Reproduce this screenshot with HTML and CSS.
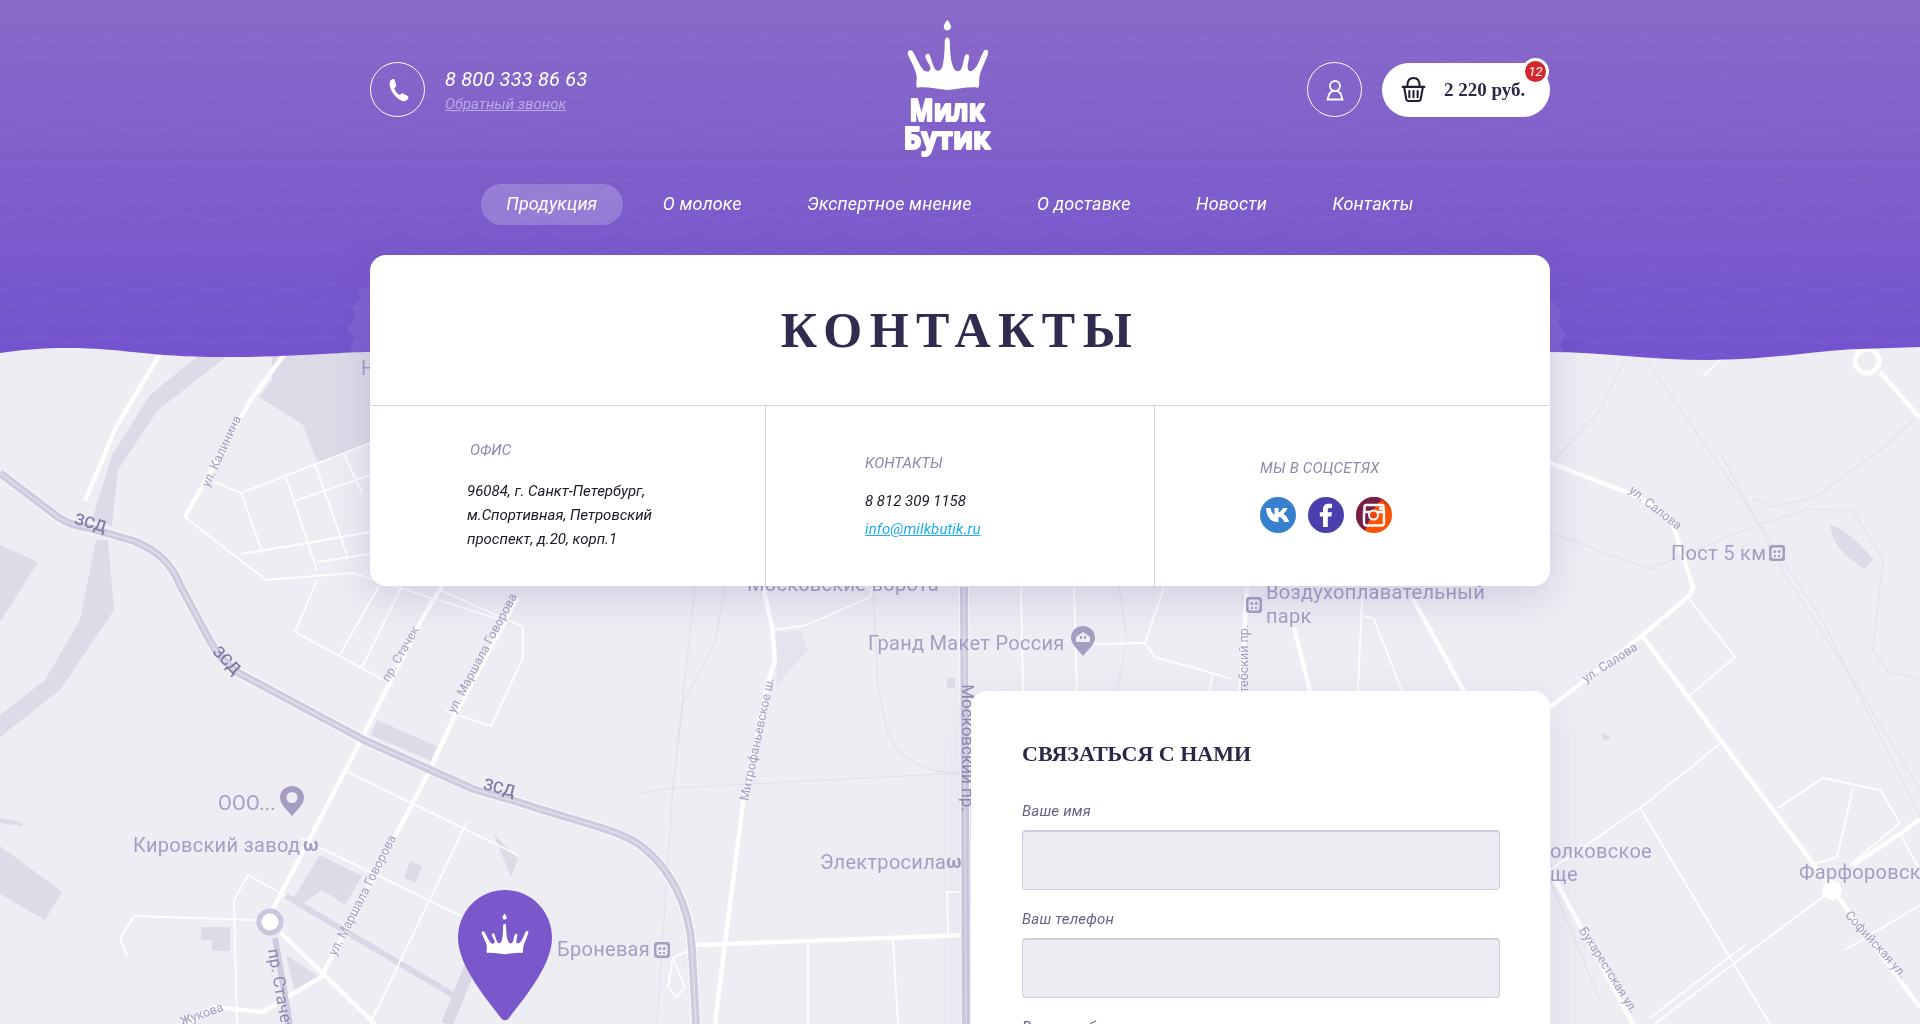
FILE: index.html
```html
<!DOCTYPE html>
<html lang="ru">
<head>
<meta charset="utf-8">
<title>Контакты — Милк Бутик</title>
<link rel="stylesheet" href="styles.css">
</head>
<body>
<div class="page">
  <svg class="map" viewBox="0 0 1920 1024" width="1920" height="1024" aria-hidden="true">
    <defs>
      <symbol id="metro" viewBox="0 0 16 16"><rect width="16" height="16" rx="3" fill="#a79dc3"/><rect x="2.5" y="2.5" width="11" height="11" rx="2" fill="#eeedf3"/><circle cx="5.8" cy="6.5" r="1.5" fill="#a79dc3"/><circle cx="10.2" cy="6.5" r="1.5" fill="#a79dc3"/><rect x="5" y="10" width="2" height="2" fill="#a79dc3"/><rect x="9" y="10" width="2" height="2" fill="#a79dc3"/></symbol>
      <symbol id="loc" viewBox="0 0 24 30"><path d="M12 0C5.4 0 0 5 0 11.5 0 18 7 24 12 30c5-6 12-12 12-18.500C24 5 18.600 0 12 0z" fill="#a79dc3"/><circle cx="12" cy="11.500" r="5.500" fill="#eeedf3"/></symbol>
      <symbol id="house" viewBox="0 0 24 30"><path d="M12 0C5.4 0 0 5 0 11.5 0 18 7 24 12 30c5-6 12-12 12-18.500C24 5 18.600 0 12 0z" fill="#a79dc3"/><path d="M5 11 12 6 19 11V16H5Z" fill="#eeedf3"/><rect x="9" y="10" width="2" height="3" fill="#a79dc3"/><rect x="13" y="10" width="2" height="3" fill="#a79dc3"/></symbol>
      <symbol id="crown" viewBox="80 28 250 218">
        <path d="M203 30C209 38 215 46 214 52 213 60 207 62 203 62 199 62 193 60 192 52 191 46 197 38 203 30Z"/>
        <path d="M203 84C209 84 211 92 211 105 211 130 214 160 222 176 228 188 240 190 246 178 251 165 252 150 256 140 259 132 270 134 269 144 267 158 262 172 266 182 272 192 284 182 292 170 300 158 306 136 314 124 320 118 330 122 326 134 318 160 304 180 300 205 298 218 302 228 296 236 270 232 240 240 203 243 170 240 140 232 112 236 106 228 112 215 110 200 106 178 92 155 84 136 80 124 92 118 98 126 108 142 118 168 130 182 140 192 152 186 152 176 150 165 140 155 137 145 135 133 146 130 150 138 155 150 158 168 166 180 175 190 185 182 188 172 194 150 195 120 195 100 195 92 197 84 203 84Z"/>
      </symbol>
    </defs>

    <rect class="m-land" width="1920" height="1024"/>

    <g class="m-blurred">
    <g class="m-dark">
      <path d="M205 350 150 395 112 455 92 520 112 526 118 470 158 410 235 350Z"/>
      <path d="M96 540 108 540 114 610 60 690 0 737 0 715 45 680 80 620Z"/>
      <path d="M0 545 38 562 0 622Z"/>
      <path d="M0 846 62 892 45 920 0 894Z"/>
      <path d="M0 818 22 822 22 826 0 823Z"/>
      <path d="M272 350 375 350 375 440 335 458 317 462 303 425 259 397 272 380Z"/>
      <path d="M377 720 437 746 431 761 371 735Z"/>
      <path d="M320 855 362 876 345 905 322 890 300 905 292 900Z"/>
      <path d="M410 861 422 866 416 883 404 878Z"/>
      <path d="M493 833 518 859 511 877Z"/>
      <path d="M201 927 230 927 230 951 212 951 212 940 201 940Z"/>
      <path d="M286 955 319 977 295 992Z"/>
      <path d="M775 633 800 630 808 650 790 670 777 687Z" opacity=".55"/>
      <path d="M947 678 955 678 955 688 947 688Z"/>
      <path d="M1830 525C1845 528 1865 548 1873 560L1865 569C1850 560 1833 548 1830 525Z"/>
      <path d="M1602 733 1610 736 1608 741 1603 740Z"/>
    </g>

    <g class="m-band">
      <path d="M286 896 460 999"/>
      <path d="M473 960 447 1024" class="m-band-w"/>
    </g>

    <g class="m-faint">
      <path d="M695 587 673 787 657 1024"/>
      <path d="M725 587 715 643 683 703 673 787"/>
      <path d="M640 793 673 788 960 773"/>
      <path d="M873 587 878 687 887 730C895 755 920 773 960 773"/>
      <path d="M1119 587 1127 640 1117 691"/>
      <path d="M1647 361 1757 520 1823 622 1920 817"/>
      <path d="M1722 456 1787 578 1850 675 1920 790"/>
      <path d="M1753 498 1773 507 1817 496 1887 445 1920 414"/>
      <path d="M1550 533 1650 569 1757 525 1807 509 1853 511 1883 560 1873 649 1887 671 1920 680"/>
      <path d="M1550 465 1600 410 1625 360"/>
      <path d="M1600 1000 1550 880"/>
    </g>

    <g class="m-thick">
      <path d="M161 352 116 427 85 501"/>
      <path d="M286 352 250 401 185 517"/>
      <path d="M442 586 422 619 357 748 272 911"/>
      <path d="M518 597 455 715 429 772 321 977 263 1012 214 1007 187 1024"/>
      <path d="M281 933 375 1024"/>
      <path d="M763 587 772 627 775 660 768 683 743 803 725 943 715 1024"/>
      <path d="M695 945 967 935"/>
      <path d="M1247 587 1241 691"/>
      <path d="M1294 627 1310 691"/>
      <path d="M1413 599 1464 691"/>
      <path d="M1540 459 1623 491C1650 502 1666 512 1673 525L1693 587 1690 595 1643 635 1540 715"/>
      <path d="M1643 637 1833 890 1920 1007"/>
      <path d="M1880 372 1920 418"/>
      <path d="M1550 870 1633 1024"/>
      <path d="M1920 819 1900 834 1853 865"/>
    </g>

    <g class="m-thin">
      <path d="M185 517 266 580 353 573 498 619"/>
      <path d="M214 482 241 493 370 443"/>
      <path d="M241 493 263 554"/>
      <path d="M286 477 317 571"/>
      <path d="M295 501 370 475"/>
      <path d="M315 464 348 558"/>
      <path d="M344 454 362 493"/>
      <path d="M241 554 308 543 370 532"/>
      <path d="M317 562 370 554"/>
      <path d="M317 580 295 632 393 685"/>
      <path d="M339 656 379 586"/>
      <path d="M362 667 402 586"/>
      <path d="M440 590 523 627 523 658 491 726 446 711"/>
      <path d="M348 772 518 855"/>
      <path d="M467 822 370 1024"/>
      <path d="M300 838 480 925"/>
      <path d="M237 1024 234 900 248 875 286 896"/>
      <path d="M134 916 254 920"/>
      <path d="M120 938 134 916"/>
      <path d="M120 938 127 957"/>
      <path d="M773 630 807 625 870 597 873 587"/>
      <path d="M808 943 808 1024"/>
      <path d="M893 940 898 1024"/>
      <path d="M948 933 947 892 960 892"/>
      <path d="M700 945 673 958 668 987 677 997 685 987 673 958"/>
      <path d="M1021 587 1023 691"/>
      <path d="M1074 587 1077 691"/>
      <path d="M1164 587 1145 643 1155 657 1233 679"/>
      <path d="M1094 644 1145 643"/>
      <path d="M1213 675 1209 691"/>
      <path d="M1362 599 1358 691"/>
      <path d="M1360 615 1374 619 1402 691"/>
      <path d="M1690 600 1735 657 1690 695"/>
      <path d="M1720 744 1640 808 1550 870"/>
      <path d="M1640 808 1770 1024"/>
      <path d="M1778 808 1823 778 1880 790 1900 823 1850 865"/>
      <path d="M1853 788 1837 857 1817 863"/>
      <path d="M1832 890 1753 949 1655 1024"/>
      <path d="M1745 945 1650 1018"/>
      <path d="M1845 950 1920 905"/>
      <path d="M1703 376 1730 352"/>
      <path d="M1900 834 1920 870"/>
    </g>

    <g class="m-highway">
      <path class="m-hw-edge" d="M0 473 58 517C68 524 78 526 89 528L134 541C160 552 172 565 180 585L210 641C216 652 226 664 237 672L366 741 473 789 518 802C570 820 615 828 640 845 670 868 690 905 692 950L696 1024"/>
      <path class="m-hw-core" d="M0 473 58 517C68 524 78 526 89 528L134 541C160 552 172 565 180 585L210 641C216 652 226 664 237 672L366 741 473 789 518 802C570 820 615 828 640 845 670 868 690 905 692 950L696 1024"/>
      <path class="m-hw-line" d="M0 473 58 517C68 524 78 526 89 528L134 541C160 552 172 565 180 585L210 641C216 652 226 664 237 672L366 741 473 789 518 802C570 820 615 828 640 845 670 868 690 905 692 950L696 1024"/>
      <path class="m-hw-edge" d="M964 587 966 1024"/>
      <path class="m-hw-core" d="M964 587 966 1024"/>
      <path class="m-hw-line" d="M964 587 966 1024"/>
    </g>

    <circle class="m-ring" cx="270" cy="922" r="11"/>
    <path class="m-ring-road" d="M275 938 290 1024"/>
    <circle class="m-ring-w" cx="1867" cy="361" r="12"/>
    <circle class="m-disc" cx="1832" cy="890" r="10"/>

    <g class="m-label">
      <text x="361" y="375">Нарвская</text>
      <text x="747" y="591">Московские ворота</text>
      <text x="868" y="650">Гранд Макет Россия</text>
      <text x="1266" y="599">Воздухоплавательный</text>
      <text x="1266" y="623">парк</text>
      <text x="1671" y="560">Пост 5 км</text>
      <text x="218" y="810">ООО...</text>
      <text x="133" y="852">Кировский завод</text>
      <text x="820" y="869">Электросила</text>
      <text x="557" y="956">Броневая</text>
      <text x="1652" y="858" text-anchor="end">Волковское</text>
      <text x="1578" y="881" text-anchor="end">кладбище</text>
      <text x="1799" y="879">Фарфоровская</text>
    </g>
    <use href="#metro" x="654" y="942" width="16" height="16"/>
    <use href="#metro" x="1769" y="545" width="16" height="16"/>
    <use href="#metro" x="1246" y="597" width="16" height="16"/>
    <use href="#loc" x="280" y="786" width="24" height="30"/>
    <use href="#house" x="1071" y="626" width="24" height="30"/>
    <g class="m-omega">
      <text x="303" y="851">ω</text>
      <text x="946" y="868">ω</text>
    </g>

    <g class="m-small">
      <text transform="translate(225 453) rotate(-65)">ул. Калинина</text>
      <text transform="translate(404 656) rotate(-60)">пр. Стачек</text>
      <text transform="translate(486 655) rotate(-62)">ул. Маршала Говорова</text>
      <text transform="translate(366 897) rotate(-63)">ул. Маршала Говорова</text>
      <text transform="translate(203 1018) rotate(-20)">Жукова</text>
      <text transform="translate(761 740) rotate(-78)">Митрофаньевское ш.</text>
      <text transform="translate(1653 511) rotate(38)">ул. Салова</text>
      <text transform="translate(1612 666) rotate(-33)">ул. Салова</text>
      <text transform="translate(1605 972) rotate(58)">Бухарестская ул.</text>
      <text transform="translate(1873 947) rotate(48)">Софийская ул.</text>
    </g>
    <g class="m-road">
      <text class="m-road-lg" transform="translate(968 748) rotate(90)">Московский пр.</text>
      <text class="m-road-md" text-anchor="end" transform="translate(1248 625) rotate(-90)">Витебский пр.</text>
      <text class="m-road-lg" transform="translate(281 990) rotate(80)">пр. Стачек</text>
      <text class="m-hw-label" transform="translate(89 528) rotate(16)">ЗСД</text>
      <text class="m-hw-label" transform="translate(223 664) rotate(46)">ЗСД</text>
      <text class="m-hw-label" transform="translate(498 793) rotate(14)">ЗСД</text>
    </g>
    </g>

    <path class="m-pin" d="M505 890C479 890 458 911 458 938 458 967 490 1003 501 1018 503 1021 507 1021 509 1018 520 1003 552 967 552 938 552 911 531 890 505 890Z"/>
    <use href="#crown" x="481" y="913" width="48" height="42" class="m-pin-crown"/>
  </svg>

  <svg class="hero" viewBox="0 0 1920 370" width="1920" height="370" aria-hidden="true">
    <defs>
      <linearGradient id="heroGrad" x1="0" y1="0" x2="0" y2="1">
        <stop offset="0" stop-color="#8a69c9"/>
        <stop offset="1" stop-color="#7252ce"/>
      </linearGradient>
      <pattern id="waves" width="73" height="17.500" patternUnits="userSpaceOnUse">
        <path d="M0 9C12 9 24 4 36.500 4 49 4 61 13 73 9" class="h-wave"/>
      </pattern>
      <clipPath id="heroClip">
        <path d="M0 353C20 350 40 348 70 348 120 348 150 357 220 357 300 357 340 352 370 352L1550 352C1600 352 1650 360 1707 360 1770 360 1820 350 1860 349L1920 347 1920 0 0 0Z"/>
      </clipPath>
    </defs>
    <g clip-path="url(#heroClip)">
      <rect width="1920" height="370" fill="url(#heroGrad)"/>
      <rect y="36" width="1920" height="334" fill="url(#waves)"/>
      <path class="h-tree" d="M370 285 358 290 360 300 352 306 356 318 347 328 354 338 350 352 370 352Z"/>
      <path class="h-tree" d="M1550 300 1562 310 1558 322 1566 334 1560 345 1564 352 1550 352Z"/>
    </g>
  </svg>

  <div class="container">
    <header class="header">
      <div class="side">
        <span class="circle">
          <svg class="i-phone" viewBox="0 0 24 24"><path d="M7 3.500C8 3 9 3 9.500 4.500L10.500 8C10.800 9 10 9.800 9 10.500 9.500 12.500 11.500 15 13.500 16 14.500 15 15.200 14.300 16.200 14.800L19.500 16.500C20.500 17 20.500 18 20 19 19 20.800 17 21.500 15 20.500 10 18.500 6 13 5.300 8 5 6 5.500 4.500 7 3.500Z"/></svg>
        </span>
        <div class="phone">
          <div class="phone-num">8 800 333 86 63</div>
          <a class="phone-back" href="#">Обратный звонок</a>
        </div>
      </div>

      <a class="logo" href="#" aria-label="Милк Бутик">
        <svg class="logo-svg" viewBox="0 0 90 137" width="90" height="137">
          <use href="#crown" x="4.500" y="-1" width="83" height="72" class="logo-crown"/>
          <text class="logo-text" x="45" y="101" text-anchor="middle" textLength="75" lengthAdjust="spacingAndGlyphs">Милк</text>
          <text class="logo-text" x="45" y="129" text-anchor="middle" textLength="87" lengthAdjust="spacingAndGlyphs">Бутик</text>
        </svg>
      </a>

      <div class="side">
        <a class="circle" href="#" aria-label="Кабинет">
          <svg class="i-user" viewBox="0 0 20 22"><circle cx="10" cy="7" r="5"/><path d="M2.500 20.500 4 15.500C4.500 14 6 13.200 7 12.200H13C14 13.200 15.500 14 16 15.500L17.500 20.500Z"/></svg>
        </a>
        <a class="cart" href="#">
          <svg class="i-basket" viewBox="0 0 24 26"><path class="b-line" d="M6 10C6 5 8 2 12 2 16 2 18 5 18 10"/><path class="b-line" d="M1.500 10.500H22.500"/><path class="b-line" d="M3 11 5 22C5.200 23.500 6 24 7.500 24H16.500C18 24 18.800 23.500 19 22L21 11"/><path class="b-line" d="M8 14.500V20.500M12 14.500V20.500M16 14.500V20.500"/></svg>
          <span class="cart-sum">2 220 руб.</span>
          <span class="cart-badge">12</span>
        </a>
      </div>
    </header>

    <nav class="nav">
      <a class="nav-item is-active" href="#">Продукция</a>
      <a class="nav-item" href="#">О молоке</a>
      <a class="nav-item" href="#">Экспертное мнение</a>
      <a class="nav-item" href="#">О доставке</a>
      <a class="nav-item" href="#">Новости</a>
      <a class="nav-item" href="#">Контакты</a>
    </nav>

    <section class="card">
      <h1 class="title">Контакты</h1>
      <div class="cols">
        <div class="col col-office">
          <div class="col-label col-label-shift">Офис</div>
          <p class="address">96084, г. Санкт-Петербург,<br>м.Спортивная, Петровский<br>проспект, д.20, корп.1</p>
        </div>
        <div class="col col-contacts">
          <div class="col-label">Контакты</div>
          <div class="contact-line">8 812 309 1158</div>
          <a class="contact-link" href="#">info@milkbutik.ru</a>
        </div>
        <div class="col col-social">
          <div class="col-label col-label-wide">Мы в соцсетях</div>
          <div class="socials">
            <a href="#" aria-label="ВКонтакте">
              <svg class="soc" viewBox="0 0 36 36"><circle cx="18" cy="18" r="18" fill="#3680cd"/><path fill="#fff" d="M6 11H10.500C11 14 12.500 17 14.500 17.800V11H18.500V15.500C20 15.300 22 13.200 23 11H27.500C26.700 13.500 24.800 15.800 23.300 16.800 25 17.800 27.700 20 29 25H24.300C23.300 22 21 20 18.500 19.700V25H17C11 25 6.600 20 6 11Z"/></svg>
            </a>
            <a href="#" aria-label="Facebook">
              <svg class="soc" viewBox="0 0 36 36"><circle cx="18" cy="18" r="18" fill="#4b3fb0"/><path fill="#fff" d="M15 30V19.500H11.800V15.300H15V12.500C15 8.800 17 6.800 20.500 6.800H24V11H21.700C20.300 11 19.800 11.700 19.800 12.900V15.300H24L23.300 19.500H19.800V30Z"/></svg>
            </a>
            <a href="#" aria-label="Instagram">
              <svg class="soc" viewBox="0 0 36 36"><defs><clipPath id="igc"><circle cx="18" cy="18" r="18"/></clipPath></defs><g clip-path="url(#igc)"><rect width="36" height="36" fill="#ff5200"/><path d="M0 0H30L20 8 8 36H0Z" fill="#751f48"/><path d="M22 0H36V14L28 6Z" fill="#d13a2a"/></g><path fill="none" stroke="#fff" stroke-width="2.400" d="M8 15H28V26C28 27.500 27 28.500 25.500 28.500H10.500C9 28.500 8 27.500 8 26Z"/><path fill="none" stroke="#fff" stroke-width="2.400" d="M8.500 15V10C8.500 8.800 9.300 8 10.500 8H25.500C26.700 8 27.500 8.800 27.500 10V15"/><rect x="23" y="9.500" width="3.500" height="3.500" rx="1" fill="#fff"/><circle cx="17.500" cy="18" r="5.500" fill="#fff"/><circle cx="17.500" cy="18" r="3.500" fill="#f2450a"/></svg>
            </a>
          </div>
        </div>
      </div>
    </section>

    <section class="form-card">
      <h2 class="form-title">Связаться с нами</h2>
      <label class="f-label" for="n">Ваше имя</label>
      <input class="f-input" id="n" type="text">
      <label class="f-label" for="p">Ваш телефон</label>
      <input class="f-input" id="p" type="text">
      <label class="f-label" for="m">Ваше сообщение</label>
    </section>
  </div>
</div>
</body>
</html>
```

FILE: styles.css
```css
* { box-sizing: border-box; }
html, body { margin: 0; padding: 0; }
body { background: #eeedf3; font-family: "Roboto", "Liberation Sans", sans-serif; overflow: hidden; }
a { color: inherit; text-decoration: none; }

.page { position: relative; width: 1920px; height: 1024px; overflow: hidden; }
.map, .hero { position: absolute; left: 0; top: 0; display: block; }

/* map */
.m-blurred { filter: blur(.45px); }
.m-land { fill: #eeedf3; }
.m-dark path { fill: #dedbe8; }
.m-band path { fill: none; stroke: #dbd7e6; stroke-width: 6; }
.m-band .m-band-w { stroke-width: 12; }
.m-faint path { fill: none; stroke: #e2e0eb; stroke-width: 1.2; }
.m-thick path { fill: none; stroke: #fff; stroke-width: 4.500; stroke-linejoin: round; opacity: .95; }
.m-thin path { fill: none; stroke: #fff; stroke-width: 1.800; stroke-linejoin: round; opacity: .95; }
.m-highway path { fill: none; stroke-linejoin: round; }
.m-hw-edge { stroke: #fff; stroke-width: 10; opacity: .8; }
.m-hw-core { stroke: #cfcbdf; stroke-width: 8; }
.m-hw-line { stroke: #e2dfea; stroke-width: 1.5; }
.m-ring { fill: #fff; stroke: #cbc6dc; stroke-width: 5; }
.m-ring-road { fill: none; stroke: #cfcbdf; stroke-width: 6; }
.m-ring-w { fill: none; stroke: #fff; stroke-width: 5; }
.m-disc { fill: #fff; }
.m-label text { font: 400 20px "Roboto", sans-serif; letter-spacing: .3px; fill: #a79dc3; }
.m-omega text { font: 700 19px "Roboto", sans-serif; fill: #a79dc3; }
.m-small text { font: 400 12.500px "Roboto", sans-serif; fill: #a79dc3; text-anchor: middle; }
.m-road-lg { font: 400 17px "Roboto", sans-serif; fill: #9087b0; }
.m-road-md { font: 400 12.500px "Roboto", sans-serif; fill: #a79dc3; }
.m-hw-label { font: 500 16px "Roboto", sans-serif; fill: #8279a6; text-anchor: middle; }
.m-road .m-road-lg { text-anchor: middle; dominant-baseline: central; }
.m-pin { fill: #7a58cc; }
.m-pin-crown { fill: #fff; }

/* hero */
.h-wave { fill: none; stroke: #fff; stroke-opacity: .028; stroke-width: 2; }
.h-tree { fill: #fff; opacity: .07; }

/* layout */
.container { position: relative; width: 1180px; margin: 0 auto; }
.header { display: flex; justify-content: space-between; align-items: flex-start; height: 184px; padding-top: 20px; }
.side { display: flex; align-items: center; gap: 20px; margin-top: 42px; }
.circle { flex: none; display: flex; align-items: center; justify-content: center; width: 55px; height: 55px; border: 1px solid #fff; border-radius: 50%; }
.i-phone { width: 30px; height: 30px; fill: #fff; }
.i-user { width: 20px; height: 22px; fill: none; stroke: #fff; stroke-width: 1.8; }
.phone-num { font-size: 20px; font-style: italic; line-height: 24px; color: #fff; letter-spacing: .2px; white-space: nowrap; }
.phone-back { display: block; margin-top: 4px; font-size: 15px; font-style: italic; line-height: 18px; color: #bba9e6; text-decoration: underline; white-space: nowrap; }

.logo { display: block; width: 90px; height: 137px; }
.logo-svg { display: block; overflow: visible; }
.logo-crown { fill: #fff; stroke: none; }
.logo-text { font: 700 30px "Open Sans", "Noto Sans", sans-serif; fill: #fff; stroke: #fff; stroke-width: 2.200; stroke-linejoin: round; }

.cart { position: relative; display: flex; align-items: center; width: 168px; height: 54px; padding-left: 19px; background: #fff; border-radius: 27px; }
.i-basket { width: 25px; height: 27px; fill: none; }
.b-line { stroke: #231a36; stroke-width: 2; fill: none; stroke-linecap: round; }
.cart-sum { margin-left: 18px; font: 700 19px "Liberation Serif", serif; color: #2e2748; white-space: nowrap; }
.cart-badge { position: absolute; right: 1px; top: -5px; width: 27px; height: 27px; border: 3px solid #fff; border-radius: 50%; background: #d3262e; color: #fff; font-size: 13px; font-style: italic; line-height: 21px; text-align: center; }

.nav { display: flex; justify-content: center; gap: 14.500px; height: 41px; margin-bottom: 30px; }
.nav-item { display: flex; align-items: center; padding: 0 25.500px 2px; border-radius: 21px; font-size: 18px; font-style: italic; letter-spacing: .12px; color: #fff; white-space: nowrap; }
.nav-item.is-active { background: rgba(255, 255, 255, .2); }

.card { background: #fff; border-radius: 16px; box-shadow: 0 10px 40px rgba(90, 70, 150, .2); }
.title { display: flex; align-items: center; justify-content: center; height: 151px; margin: 0; border-bottom: 1px solid #d6d3e4; font: 700 50px "Liberation Serif", serif; letter-spacing: 7.500px; text-transform: uppercase; color: #332a50; }
.cols { display: grid; grid-template-columns: 395px 389px 1fr; height: 180px; }
.col { display: flex; flex-direction: column; justify-content: center; align-items: flex-start; }
.col + .col { border-left: 1px solid #d6d3e4; }
.col-office { padding-left: 97px; }
.col-contacts { padding-left: 99px; }
.col-social { padding-left: 105px; }
.col-label { font-size: 15px; font-style: italic; line-height: 18px; color: #8f88ab; text-transform: uppercase; }
.col-label-shift { margin-left: 3px; }
.col-label-wide { letter-spacing: .2px; }
.address { margin: 20px 0 0; font-size: 15px; font-style: italic; line-height: 24px; color: #1b1726; white-space: nowrap; }
.contact-line { margin-top: 20px; font-size: 15px; font-style: italic; line-height: 18px; color: #1b1726; }
.contact-link { margin-top: 10px; font-size: 15px; font-style: italic; line-height: 18px; letter-spacing: .1px; color: #1eaef5; text-decoration: underline; }
.socials { display: flex; gap: 12px; margin-top: 20px; }
.socials a { display: block; width: 36px; height: 36px; }
.soc { display: block; width: 36px; height: 36px; }

.form-card { width: 579px; height: 400px; margin: 105px 0 0 601px; padding: 50px 50px 0 51px; background: #fff; border-radius: 16px; box-shadow: 0 10px 40px rgba(90, 70, 150, .12); }
.form-title { margin: 0 0 35px; font: 700 22px/26px "Liberation Serif", serif; color: #2e2748; text-transform: uppercase; }
.f-label { display: block; font-size: 15px; font-style: italic; line-height: 18px; color: #6a6285; letter-spacing: .2px; margin-bottom: 10px; }
.f-input { display: block; width: 100%; height: 60px; margin: 0 0 20px; padding: 0 14px; background: #edecf3; border: 1px solid #cfcbdf; border-top-width: 2px; border-radius: 4px; outline: none; }
```
